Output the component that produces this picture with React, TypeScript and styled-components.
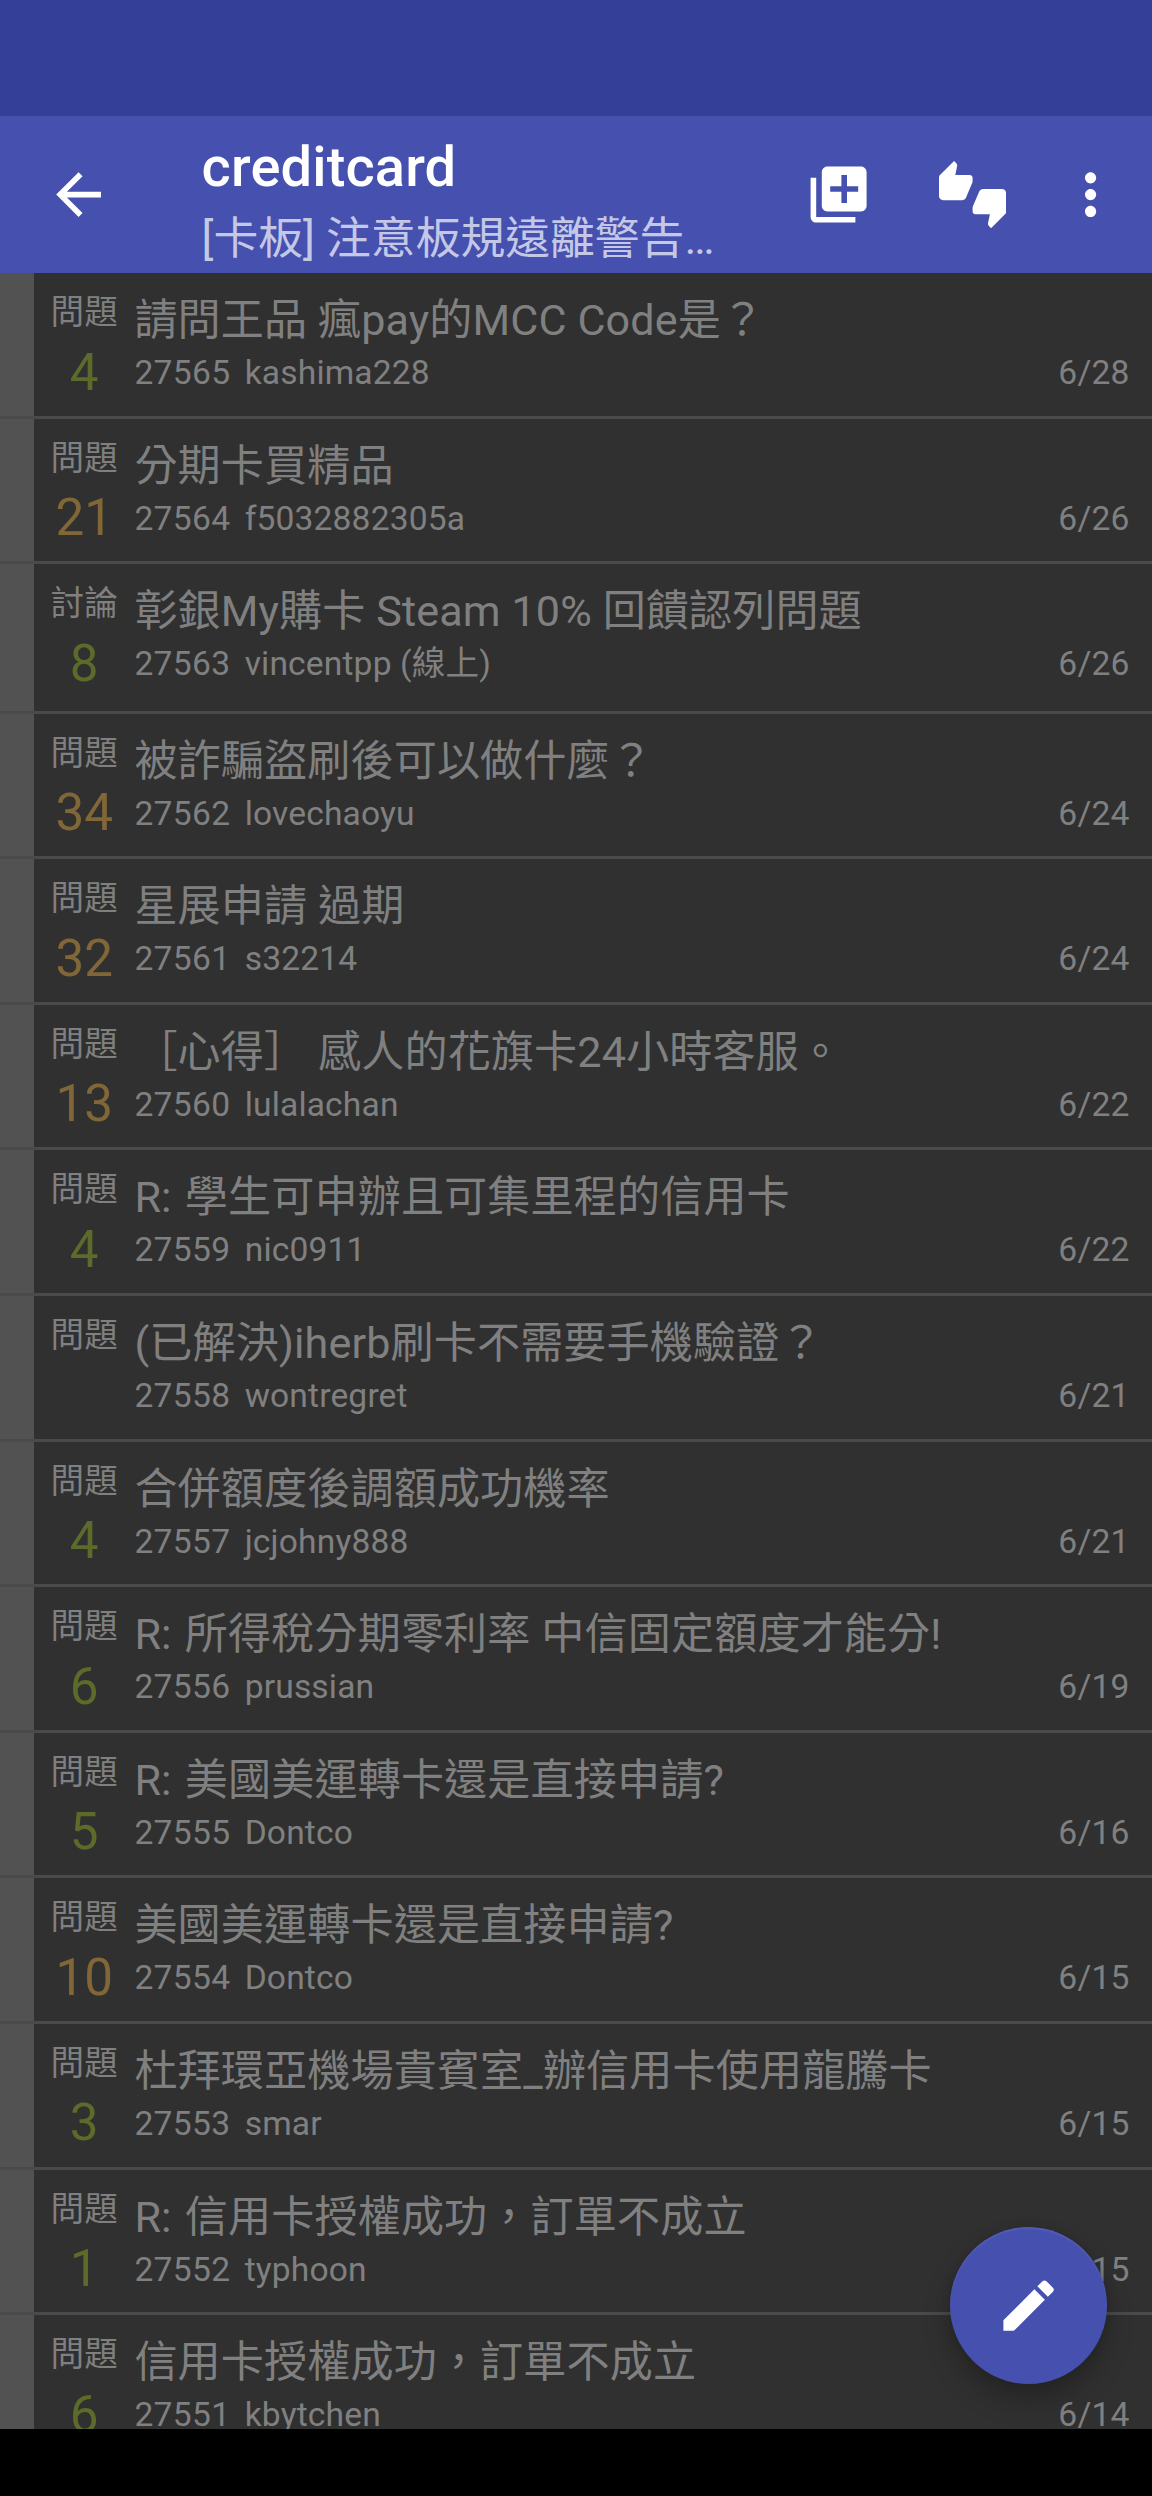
import React from "react";
import styled, { createGlobalStyle } from "styled-components";

const GlobalStyle = createGlobalStyle`
  html, body { margin: 0; padding: 0; background: #000; }
  * { box-sizing: border-box; }
`;

const Screen = styled.div`
  position: relative;
  display: flex;
  flex-direction: column;
  width: 1152px;
  height: 2496px;
  overflow: hidden;
  background: #000;
  font-family: Roboto, "Noto Sans CJK TC", sans-serif;
`;

const StatusBar = styled.div`
  flex: none;
  height: 116px;
  background: #343f98;
`;

const AppBar = styled.header`
  flex: none;
  display: flex;
  align-items: center;
  height: 157px;
  padding: 0 28px 0 44.8px;
  background: #4550af;
  color: #fff;
`;

const IconButton = styled.button<{ $gap?: number }>`
  flex: none;
  width: 67.2px;
  height: 67.2px;
  margin: 0 0 0 ${(p) => p.$gap ?? 0}px;
  padding: 0;
  border: 0;
  background: none;
  color: inherit;
`;

const Glyph = styled.svg`
  display: block;
  width: 67.2px;
  height: 67.2px;
  fill: currentColor;
`;

const Heading = styled.div`
  flex: 1;
  align-self: flex-start;
  padding: 21px 0 0 89.6px;
  white-space: nowrap;
`;

const BoardName = styled.h1`
  margin: 0;
  font-size: 56px;
  line-height: 60px;
  font-weight: 500;
  letter-spacing: 0.15px;
`;

const BoardTitle = styled.div`
  margin-top: 17px;
  font-size: 44.8px;
  line-height: 50px;
  color: rgba(255, 255, 255, 0.7);
`;

const List = styled.main`
  flex: none;
  height: 2156px;
  overflow: hidden;
  background: #303030;
`;

const Row = styled.article<{ $height: number }>`
  display: flex;
  height: ${(p) => p.$height}px;
  color: #808080;
  background: linear-gradient(to top, #4a4a4a 3px, transparent 3px);
`;

const Gutter = styled.div`
  flex: none;
  width: 34px;
  margin-bottom: 3px;
  background: #525252;
`;

const Side = styled.div`
  flex: none;
  display: flex;
  flex-direction: column;
  align-items: center;
  width: 100.4px;
  padding-top: 20px;
`;

const Tag = styled.span`
  font-size: 33.6px;
  line-height: 40px;
`;

const Count = styled.span<{ $hot: boolean }>`
  margin-top: 11.5px;
  font-size: 51.2px;
  line-height: 56px;
  color: ${(p) => (p.$hot ? "#816737" : "#5c6b2a")};
`;

const Body = styled.div`
  flex: 1;
  padding: 23px 22.4px 0 0;
  white-space: nowrap;
`;

const Title = styled.h2`
  margin: 0 0 7px;
  font-size: 43.1px;
  line-height: 50px;
  font-weight: 400;
  letter-spacing: 0.12px;
`;

const ReplyMark = styled.span`
  margin-right: 2.4px;
`;

const Meta = styled.div`
  display: flex;
  font-size: 33.6px;
  line-height: 40px;
`;

const PostId = styled.span`
  margin-right: 14.2px;
  letter-spacing: 0.35px;
`;

const Author = styled.span`
  letter-spacing: 0.15px;
`;

const PostDate = styled.time`
  margin-left: auto;
  letter-spacing: 0.2px;
`;

const ComposeButton = styled.button`
  position: absolute;
  left: 950px;
  top: 2227px;
  display: flex;
  align-items: center;
  justify-content: center;
  width: 157px;
  height: 157px;
  padding: 0;
  border: 0;
  border-radius: 50%;
  background: #4550af;
  color: #fff;
  box-shadow: 0 16px 28px rgba(0, 0, 0, 0.24), 0 0 10px rgba(0, 0, 0, 0.1),
    inset 0 2px 2px rgba(255, 255, 255, 0.08);
`;

const NavigationBar = styled.div`
  flex: 1;
  background: #000;
`;

type Post = {
  tag?: string;
  count?: number;
  reply?: boolean;
  title: string;
  id: number;
  author: string;
  date: string;
  height?: number;
};

const posts: Post[] = [
  { count: 4, title: "請問王品 瘋pay的MCC Code是？", id: 27565, author: "kashima228", date: "6/28" },
  { count: 21, title: "分期卡買精品", id: 27564, author: "f5032882305a", date: "6/26" },
  { tag: "討論", count: 8, title: "彰銀My購卡 Steam 10% 回饋認列問題", id: 27563, author: "vincentpp (線上)", date: "6/26", height: 149.4 },
  { count: 34, title: "被詐騙盜刷後可以做什麼？", id: 27562, author: "lovechaoyu", date: "6/24" },
  { count: 32, title: "星展申請 過期", id: 27561, author: "s32214", date: "6/24" },
  { count: 13, title: "［心得］ 感人的花旗卡24小時客服。", id: 27560, author: "lulalachan", date: "6/22" },
  { count: 4, reply: true, title: "學生可申辦且可集里程的信用卡", id: 27559, author: "nic0911", date: "6/22" },
  { title: "(已解決)iherb刷卡不需要手機驗證？", id: 27558, author: "wontregret", date: "6/21" },
  { count: 4, title: "合併額度後調額成功機率", id: 27557, author: "jcjohny888", date: "6/21" },
  { count: 6, reply: true, title: "所得稅分期零利率 中信固定額度才能分!", id: 27556, author: "prussian", date: "6/19" },
  { count: 5, reply: true, title: "美國美運轉卡還是直接申請?", id: 27555, author: "Dontco", date: "6/16" },
  { count: 10, title: "美國美運轉卡還是直接申請?", id: 27554, author: "Dontco", date: "6/15" },
  { count: 3, title: "杜拜環亞機場貴賓室_辦信用卡使用龍騰卡", id: 27553, author: "smar", date: "6/15" },
  { count: 1, reply: true, title: "信用卡授權成功，訂單不成立", id: 27552, author: "typhoon", date: "6/15" },
  { count: 6, title: "信用卡授權成功，訂單不成立", id: 27551, author: "kbytchen", date: "6/14" },
];

const Icon = ({ d }: { d: string }) => (
  <Glyph viewBox="0 0 24 24" aria-hidden="true">
    <path d={d} />
  </Glyph>
);

const icons = {
  back: "M20 11H7.83l5.59-5.59L12 4l-8 8 8 8 1.41-1.41L7.83 13H20v-2z",
  add: "M4 6H2v14c0 1.1.9 2 2 2h14v-2H4V6zm16-4H8c-1.1 0-2 .9-2 2v12c0 1.1.9 2 2 2h12c1.1 0 2-.9 2-2V4c0-1.1-.9-2-2-2zm-1 9h-4v4h-2v-4H9V9h4V5h2v4h4v2z",
  votes:
    "M12 6c0-.55-.45-1-1-1H5.82l.66-3.18.02-.23c0-.31-.13-.59-.33-.8L5.38 0 .44 4.94C.17 5.21 0 5.59 0 6v6.5c0 .83.67 1.5 1.5 1.5h6.75c.62 0 1.15-.38 1.38-.91l2.26-5.29c.07-.17.11-.36.11-.55V6zm10.5 4h-6.75c-.62 0-1.15.38-1.38.91l-2.26 5.29c-.07.17-.11.36-.11.55V18c0 .55.45 1 1 1h5.18l-.66 3.18-.02.24c0 .31.13.59.33.8l.79.78 4.94-4.94c.27-.27.44-.65.44-1.06v-6.5c0-.83-.67-1.5-1.5-1.5z",
  more: "M12 8c1.1 0 2-.9 2-2s-.9-2-2-2-2 .9-2 2 .9 2 2 2zm0 2c-1.1 0-2 .9-2 2s.9 2 2 2 2-.9 2-2-.9-2-2-2zm0 6c-1.1 0-2 .9-2 2s.9 2 2 2 2-.9 2-2-.9-2-2-2z",
  edit: "M3 17.25V21h3.75L17.81 9.94l-3.75-3.75L3 17.25zM20.71 7.04c.39-.39.39-1.02 0-1.41l-2.34-2.34c-.39-.39-1.02-.39-1.41 0l-1.83 1.83 3.75 3.75 1.83-1.83z",
};

const PostRow = ({ post }: { post: Post }) => (
  <Row $height={post.height ?? 145.6}>
    <Gutter />
    <Side>
      <Tag>{post.tag ?? "問題"}</Tag>
      {post.count !== undefined && <Count $hot={post.count >= 10}>{post.count}</Count>}
    </Side>
    <Body>
      <Title>
        {post.reply && <ReplyMark>R: </ReplyMark>}
        {post.title}
      </Title>
      <Meta>
        <PostId>{post.id}</PostId>
        <Author>{post.author}</Author>
        <PostDate>{post.date}</PostDate>
      </Meta>
    </Body>
  </Row>
);

export default function App() {
  return (
    <Screen>
      <GlobalStyle />
      <StatusBar />
      <AppBar>
        <IconButton aria-label="Back">
          <Icon d={icons.back} />
        </IconButton>
        <Heading>
          <BoardName>creditcard</BoardName>
          <BoardTitle>[卡板] 注意板規遠離警告…</BoardTitle>
        </Heading>
        <IconButton aria-label="Add">
          <Icon d={icons.add} />
        </IconButton>
        <IconButton $gap={67.2} aria-label="Votes">
          <Icon d={icons.votes} />
        </IconButton>
        <IconButton $gap={50.4} aria-label="More">
          <Icon d={icons.more} />
        </IconButton>
      </AppBar>
      <List>
        {posts.map((post) => (
          <PostRow key={post.id} post={post} />
        ))}
      </List>
      <NavigationBar />
      <ComposeButton aria-label="Compose">
        <Icon d={icons.edit} />
      </ComposeButton>
    </Screen>
  );
}
